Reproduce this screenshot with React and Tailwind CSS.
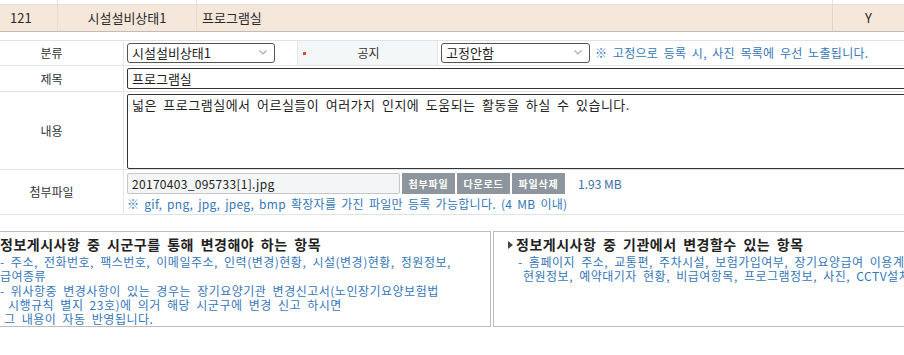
import React from "react";

const font = { fontFamily: '"Noto Sans CJK KR", "Noto Sans", sans-serif' };

const Select = ({ value, width }) => (
  <div className={`relative h-[20px] ${width}`}>
    <select
      defaultValue={value}
      className="appearance-none w-full h-full border border-[#555] rounded-[3px] bg-white pl-[4px] text-[13px] leading-[18px] text-[#222] outline-none"
    >
      <option>{value}</option>
    </select>
    <svg
      className="absolute right-[8px] top-[7px] pointer-events-none"
      width="8"
      height="5"
      viewBox="0 0 8 5"
    >
      <path d="M0.5 0.5 L4 4 L7.5 0.5" fill="none" stroke="#a8adb1" strokeWidth="1.2" />
    </svg>
  </div>
);

const GreyButton = ({ children }) => (
  <button className="h-[21px] w-[53px] bg-[#8d969d] text-white text-[10px] font-bold leading-[21px] tracking-[0.8px]">
    {children}
  </button>
);

const Arrow = () => (
  <svg width="5" height="8" viewBox="0 0 5 8" className="mr-[3px] mt-[1px] shrink-0">
    <path d="M0 0 L5 4 L0 8 Z" fill="#444" />
  </svg>
);

const App = () => {
  return (
    <div style={font} className="w-[904px] h-[355px] overflow-hidden bg-white text-[#333] text-[12px]">
      {/* list rows */}
      <div className="flex h-[4px]">
        <div className="w-[58px] border-r border-[#e2e2e2]" />
        <div className="w-[139px] border-r border-[#e2e2e2]" />
        <div className="w-[636px] border-r border-[#e2e2e2]" />
        <div className="flex-1" />
      </div>
      <div className="flex h-[28px] bg-[#f5e7da] border-t border-[#e6dccf] border-b border-b-[#bdbdbd] leading-[26px] text-[13px] text-[#2a2a2a]">
        <div className="w-[58px] border-r border-[#eadccd] pl-[10px]">121</div>
        <div className="w-[139px] border-r border-[#eadccd] text-center">시설설비상태1</div>
        <div className="w-[636px] border-r border-[#e3d6c8] pl-[5px]">프로그램실</div>
        <div className="flex-1 text-center">Y</div>
      </div>

      {/* form */}
      <div className="mt-[8px] border-t border-[#dfe3e6]">
        <div className="flex h-[25px] border-b border-[#dfe3e6]">
          <div className="w-[124px] shrink-0 border-r border-[#e3e6e8] pr-[20px] text-center leading-[24px]">분류</div>
          <div className="w-[173px] shrink-0 pl-[3px] pt-[2px]">
            <Select value="시설설비상태1" width="w-[148px]" />
          </div>
          <div className="w-[141px] shrink-0 flex items-center bg-[#f4f7f8] border-l border-r border-[#e3e6e8]">
            <span className="ml-[5px] w-[3px] h-[3px] bg-[#e0452a]" />
            <span className="flex-1 text-center pr-[6px] leading-[24px]">공지</span>
          </div>
          <div className="flex-1 flex items-start pl-[3px] pt-[2px] min-w-0">
            <Select value="고정안함" width="w-[149px] shrink-0" />
            <span className="ml-[5px] whitespace-nowrap text-[#3577b8] leading-[20px] tracking-[0.3px] [word-spacing:2.5px]">
              ※ 고정으로 등록 시, 사진 목록에 우선 노출됩니다.
            </span>
          </div>
        </div>

        <div className="flex h-[26px] border-b border-[#dfe3e6]">
          <div className="w-[124px] shrink-0 border-r border-[#e3e6e8] pr-[20px] text-center leading-[25px]">제목</div>
          <div className="flex-1 pl-[3px] pt-[2px]">
            <input
              defaultValue="프로그램실"
              className="w-[800px] h-[21px] border border-[#333] rounded-[2px] px-[4px] text-[13px] text-[#222] outline-none"
            />
          </div>
        </div>

        <div className="flex h-[78px] border-b border-[#dfe3e6]">
          <div className="w-[124px] shrink-0 border-r border-[#e3e6e8] pr-[20px] flex items-center justify-center">내용</div>
          <div className="flex-1 pl-[3px] pt-[2px]">
            <textarea
              defaultValue="넓은 프로그램실에서 어르실들이 여러가지 인지에 도움되는 활동을 하실 수 있습니다."
              className="w-[800px] h-[75px] resize-none border border-[#333] rounded-[2px] px-[4px] pt-[1px] text-[13px] leading-[17px] text-[#222] outline-none tracking-[0.5px] [word-spacing:3px]"
            />
          </div>
        </div>

        <div className="flex h-[45px] border-b border-[#dfe3e6]">
          <div className="w-[124px] shrink-0 border-r border-[#e3e6e8] pr-[20px] flex items-center justify-center">첨부파일</div>
          <div className="flex-1 pl-[3px] pt-[3px]">
            <div className="flex items-center gap-[2px]">
              <div className="w-[273px] h-[21px] border border-[#c4c8cb] rounded-[2px] bg-[#f3f5f6] pl-[4px] leading-[19px] text-[#222] tracking-[0.3px]">
                20170403_095733[1].jpg
              </div>
              <GreyButton>첨부파일</GreyButton>
              <GreyButton>다운로드</GreyButton>
              <GreyButton>파일삭제</GreyButton>
              <span className="ml-[11px] text-[#3a6ea5]">1.93 MB</span>
            </div>
            <div className="mt-[2px] text-[#3577b8] leading-[16px] whitespace-nowrap tracking-[0.3px] [word-spacing:2px]">
              ※ gif, png, jpg, jpeg, bmp 확장자를 가진 파일만 등록 가능합니다. (4 MB 이내)
            </div>
          </div>
        </div>
      </div>

      {/* info boxes */}
      <div className="flex mt-[16px] gap-[2px]">
        <div className="-ml-[23px] w-[514px] h-[96px] shrink-0 border border-[#bdbdbd] pl-[14px] pt-[4px]">
          <div className="flex items-center text-[14px] font-bold text-[#222] leading-[16px] whitespace-nowrap tracking-[0.5px] [word-spacing:3px]">
            <Arrow />
            정보게시사항 중 시군구를 통해 변경해야 하는 항목
          </div>
          <div className="mt-[3px] pl-[8px] text-[#3577b8] leading-[14.3px] whitespace-nowrap tracking-[0.5px] [word-spacing:3px]">
            <div>- 주소, 전화번호, 팩스번호, 이메일주소, 인력(변경)현황, 시설(변경)현황, 정원정보,</div>
            <div>급여종류</div>
            <div>- 위사항중 변경사항이 있는 경우는 장기요양기관 변경신고서(노인장기요양보험법</div>
            <div className="pl-[8px]">시행규칙 별지 23호)에 의거 해당 시군구에 변경 신고 하시면</div>
            <div className="pl-[4px]">그 내용이 자동 반영됩니다.</div>
          </div>
        </div>
        <div className="w-[500px] h-[96px] shrink-0 border border-[#bdbdbd] pl-[14px] pt-[4px]">
          <div className="flex items-center text-[14px] font-bold text-[#222] leading-[16px] whitespace-nowrap tracking-[0.5px] [word-spacing:3px]">
            <Arrow />
            정보게시사항 중 기관에서 변경할수 있는 항목
          </div>
          <div className="mt-[3px] pl-[10px] text-[#3577b8] leading-[14.3px] whitespace-nowrap tracking-[0.5px] [word-spacing:3px]">
            <div>- 홈페이지 주소, 교통편, 주차시설, 보험가입여부, 장기요양급여 이용계약서,</div>
            <div className="pl-[5px]">현원정보,  예약대기자 현황, 비급여항목, 프로그램정보, 사진, CCTV설치여부</div>
          </div>
        </div>
      </div>
    </div>
  );
};

export default App;
